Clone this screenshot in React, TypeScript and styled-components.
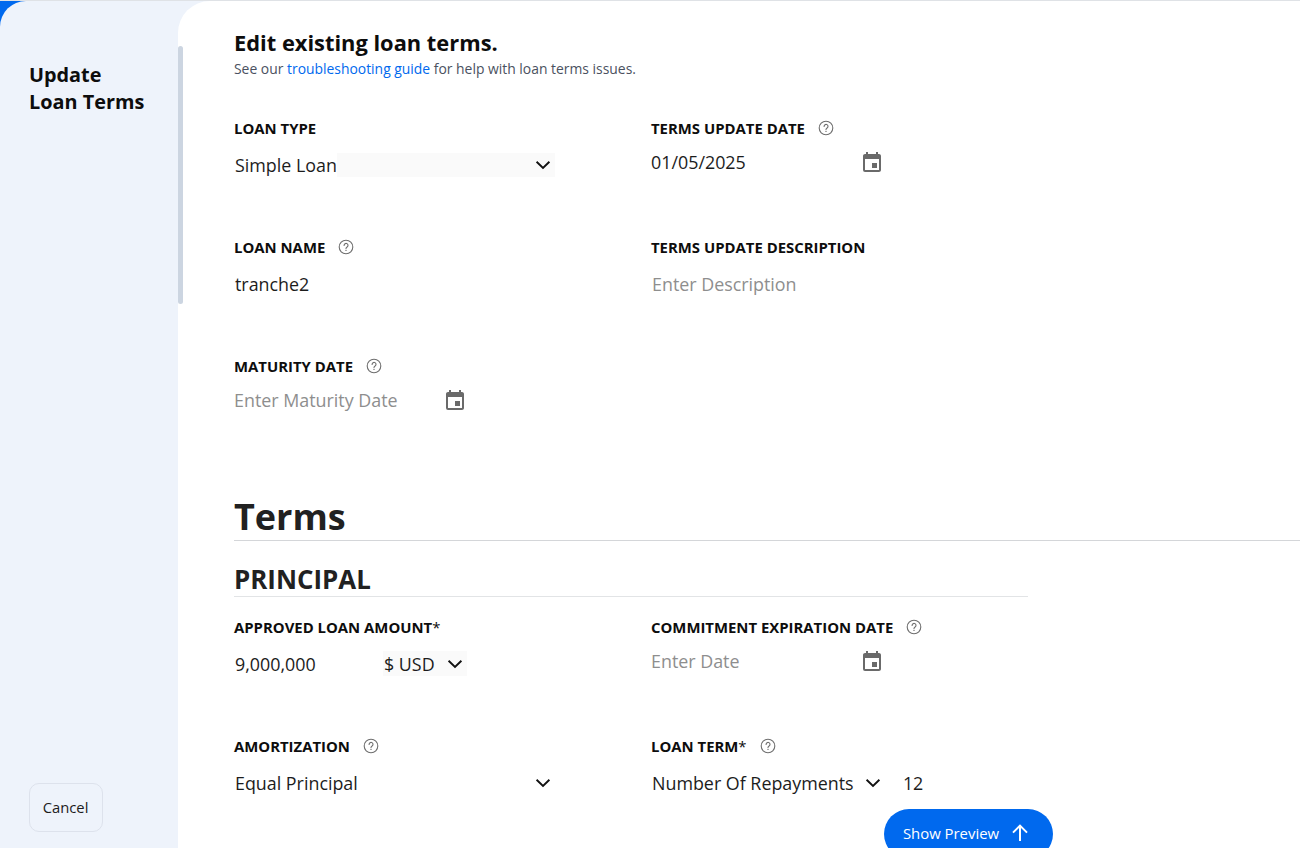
import React from "react";
import styled, { createGlobalStyle } from "styled-components";

const Global = createGlobalStyle`
  html, body { margin: 0; padding: 0; height: 100%; overflow: hidden; background: #fff; }
  body { font-family: "Open Sans", "Liberation Sans", sans-serif; color: #1c1c1c; }
  * { box-sizing: border-box; }
`;

const Page = styled.div`
  position: relative;
  width: 1300px;
  height: 848px;
  overflow: hidden;
  background: #0069ee;
  border-top: 1px solid #dfe2e6;
  clip-path: inset(0);
`;
const Shell = styled.div`
  display: flex;
  height: 847px;
  background: #eef3fb;
  border-top-left-radius: 26px;
  box-shadow: 1000px 0 0 #eef3fb;
`;
const Sidebar = styled.aside`
  width: 178px;
  flex: none;
  display: flex;
  flex-direction: column;
  justify-content: space-between;
  padding: 60px 0 16px 29px;
`;
const SideTitle = styled.h2`
  margin: 0;
  font-size: 19.85px;
  line-height: 27px;
  font-weight: 700;
  color: #0d0d0d;
`;
const CancelButton = styled.button`
  width: 74px;
  height: 49px;
  border: 1px solid #dde2ec;
  border-radius: 10px;
  background: transparent;
  font: 400 14.8px "Open Sans", sans-serif;
  color: #1c1c1c;
  padding: 0 1px 1px 0;
`;
const Main = styled.main`
  flex: 1;
  background: #fff;
  border-top-left-radius: 32px;
  padding: 27px 0 0 56px;
  position: relative;
  overflow: hidden;
`;
const Scrollbar = styled.div`
  position: absolute;
  left: 0;
  top: 45px;
  width: 5px;
  height: 258px;
  background: #ccd5e1;
  border-radius: 3px;
`;
const Heading = styled.h1`
  margin: 0;
  font-size: 21.85px;
  line-height: 30px;
  font-weight: 700;
  color: #0d0d0d;
`;
const Sub = styled.p`
  margin: 2px 0 0;
  font-size: 13.9px;
  line-height: 18px;
  color: #4a5160;
  a { color: #0069ee; text-decoration: none; }
`;
const FormGrid = styled.div<{ $top: number }>`
  display: grid;
  grid-template-columns: 417px 417px;
  grid-auto-rows: 119px;
  margin-top: ${(p) => p.$top}px;
`;
const Field = styled.div`
  display: flex;
  flex-direction: column;
  align-items: flex-start;
`;
const LabelRow = styled.div`
  display: flex;
  align-items: center;
  gap: 13px;
  height: 20px;
  font-size: 14.9px;
  font-weight: 700;
  color: #0d0d0d;
  white-space: nowrap;
  span { font-weight: 400; }
`;
const ValueRow = styled.div<{ $top?: number; $left?: number; $width?: number }>`
  display: flex;
  align-items: center;
  justify-content: space-between;
  margin-top: ${(p) => p.$top ?? 11}px;
  margin-left: ${(p) => p.$left ?? 0}px;
  width: ${(p) => (p.$width ? `${p.$width}px` : "auto")};
  height: 26px;
  font-size: 17.87px;
  line-height: 26px;
  color: #1c1c1c;
  white-space: nowrap;
`;
const Placeholder = styled.span`
  color: #8e8e8e;
`;
const Select = styled.div<{ $width: number }>`
  display: flex;
  align-items: center;
  justify-content: flex-end;
  width: ${(p) => p.$width}px;
  height: 24px;
  padding-right: 2px;
  background: #fafafa;
`;
const SelectValue = styled.span`
  background: #fff;
  flex: none;
  margin-right: auto;
`;
const Heading2 = styled.h2`
  margin: 19px 0 0;
  font-size: 36px;
  line-height: 46px;
  font-weight: 700;
  color: #212121;
  border-bottom: 1px solid #d4d6d9;
`;
const Heading3 = styled.h3`
  width: 794px;
  margin: 21px 0 0;
  font-size: 25.9px;
  line-height: 34px;
  font-weight: 700;
  color: #212121;
  border-bottom: 1px solid #e2e4e6;
`;
const CurrencyGroup = styled.div`
  display: flex;
  align-items: center;
  margin-top: 14px;
  margin-left: 1px;
  font-size: 17.87px;
`;
const Amount = styled.span`
  width: 148px;
`;
const CurrencySelect = styled.div`
  display: flex;
  align-items: center;
  gap: 10px;
  width: 84px;
  height: 25px;
  padding-left: 1px;
  background: #fafafa;
`;
const InlineValue = styled.span`
  margin-left: 20px;
`;
const ShowPreview = styled.button`
  position: absolute;
  left: 706px;
  top: 808px;
  width: 169px;
  height: 50px;
  display: flex;
  align-items: center;
  justify-content: center;
  gap: 11px;
  padding: 0 4px 2px 0;
  border: none;
  border-radius: 25px;
  background: #0069ee;
  color: #fff;
  font: 400 14.9px "Open Sans", sans-serif;
`;
const CalendarSvg = styled.svg`
  margin-top: 2px;
`;

const Help = () => (
  <svg width="16" height="16" viewBox="0 0 16 16" fill="none">
    <circle cx="8" cy="8" r="6.8" stroke="#6e6e6e" strokeWidth="1.1" />
    <path d="M6.1 6.4a1.95 1.95 0 1 1 3 1.6c-.7.45-1.1.8-1.1 1.6" stroke="#6e6e6e" strokeWidth="1.1" strokeLinecap="round" />
    <circle cx="8" cy="11.4" r=".65" fill="#6e6e6e" />
  </svg>
);
const Calendar = () => (
  <CalendarSvg width="24" height="24" viewBox="0 0 24 24" fill="#6a6a6a">
    <path d="M17 12h-5v5h5v-5zM16 1v2H8V1H6v2H5c-1.11 0-1.99.9-1.99 2L3 19a2 2 0 0 0 2 2h14c1.1 0 2-.9 2-2V5c0-1.1-.9-2-2-2h-1V1h-2zm3 18H5V8h14v11z" />
  </CalendarSvg>
);
const Chevron = () => (
  <svg width="20" height="20" viewBox="0 0 20 20" fill="none">
    <path d="M3.6 6.8 10 13l6.4-6.2" stroke="#111" strokeWidth="1.9" />
  </svg>
);
const ArrowUp = () => (
  <svg width="20" height="20" viewBox="0 0 20 20" fill="none">
    <path d="M10 18V2.8M3 9.6l7-7 7 7" stroke="#fff" strokeWidth="2" />
  </svg>
);

export default function App() {
  return (
    <Page>
      <Global />
      <Shell>
        <Sidebar>
          <SideTitle>
            Update
            <br />
            Loan Terms
          </SideTitle>
          <CancelButton>Cancel</CancelButton>
        </Sidebar>
        <Main>
          <Scrollbar />
          <Heading>Edit existing loan terms.</Heading>
          <Sub>
            See our <a href="#guide">troubleshooting guide</a> for help with loan terms issues.
          </Sub>
          <FormGrid $top={40}>
            <Field>
              <LabelRow>LOAN TYPE</LabelRow>
              <ValueRow $top={14} $left={1}>
                <Select $width={320}>
                  <SelectValue>Simple Loan</SelectValue>
                  <Chevron />
                </Select>
              </ValueRow>
            </Field>
            <Field>
              <LabelRow>
                TERMS UPDATE DATE <Help />
              </LabelRow>
              <ValueRow $width={233}>
                01/05/2025 <Calendar />
              </ValueRow>
            </Field>
            <Field>
              <LabelRow>
                LOAN NAME <Help />
              </LabelRow>
              <ValueRow $top={14} $left={1}>tranche2</ValueRow>
            </Field>
            <Field>
              <LabelRow>TERMS UPDATE DESCRIPTION</LabelRow>
              <ValueRow $top={14} $left={1}>
                <Placeholder>Enter Description</Placeholder>
              </ValueRow>
            </Field>
            <Field>
              <LabelRow>
                MATURITY DATE <Help />
              </LabelRow>
              <ValueRow $width={233}>
                <Placeholder>Enter Maturity Date</Placeholder> <Calendar />
              </ValueRow>
            </Field>
          </FormGrid>
          <Heading2>Terms</Heading2>
          <Heading3>PRINCIPAL</Heading3>
          <FormGrid $top={20}>
            <Field>
              <LabelRow>
                <div>
                  APPROVED LOAN AMOUNT<span>*</span>
                </div>
              </LabelRow>
              <CurrencyGroup>
                <Amount>9,000,000</Amount>
                <CurrencySelect>
                  $ USD <Chevron />
                </CurrencySelect>
              </CurrencyGroup>
            </Field>
            <Field>
              <LabelRow>
                COMMITMENT EXPIRATION DATE <Help />
              </LabelRow>
              <ValueRow $width={233}>
                <Placeholder>Enter Date</Placeholder> <Calendar />
              </ValueRow>
            </Field>
            <Field>
              <LabelRow>
                AMORTIZATION <Help />
              </LabelRow>
              <ValueRow $top={14} $left={1} $width={318}>
                Equal Principal <Chevron />
              </ValueRow>
            </Field>
            <Field>
              <LabelRow>
                <div>
                  LOAN TERM<span>*</span>
                </div>{" "}
                <Help />
              </LabelRow>
              <ValueRow $top={14} $left={1}>
                Number Of Repayments&nbsp;&nbsp;
                <Chevron />
                <InlineValue>12</InlineValue>
              </ValueRow>
            </Field>
          </FormGrid>
          <ShowPreview>
            Show Preview <ArrowUp />
          </ShowPreview>
        </Main>
      </Shell>
    </Page>
  );
}
